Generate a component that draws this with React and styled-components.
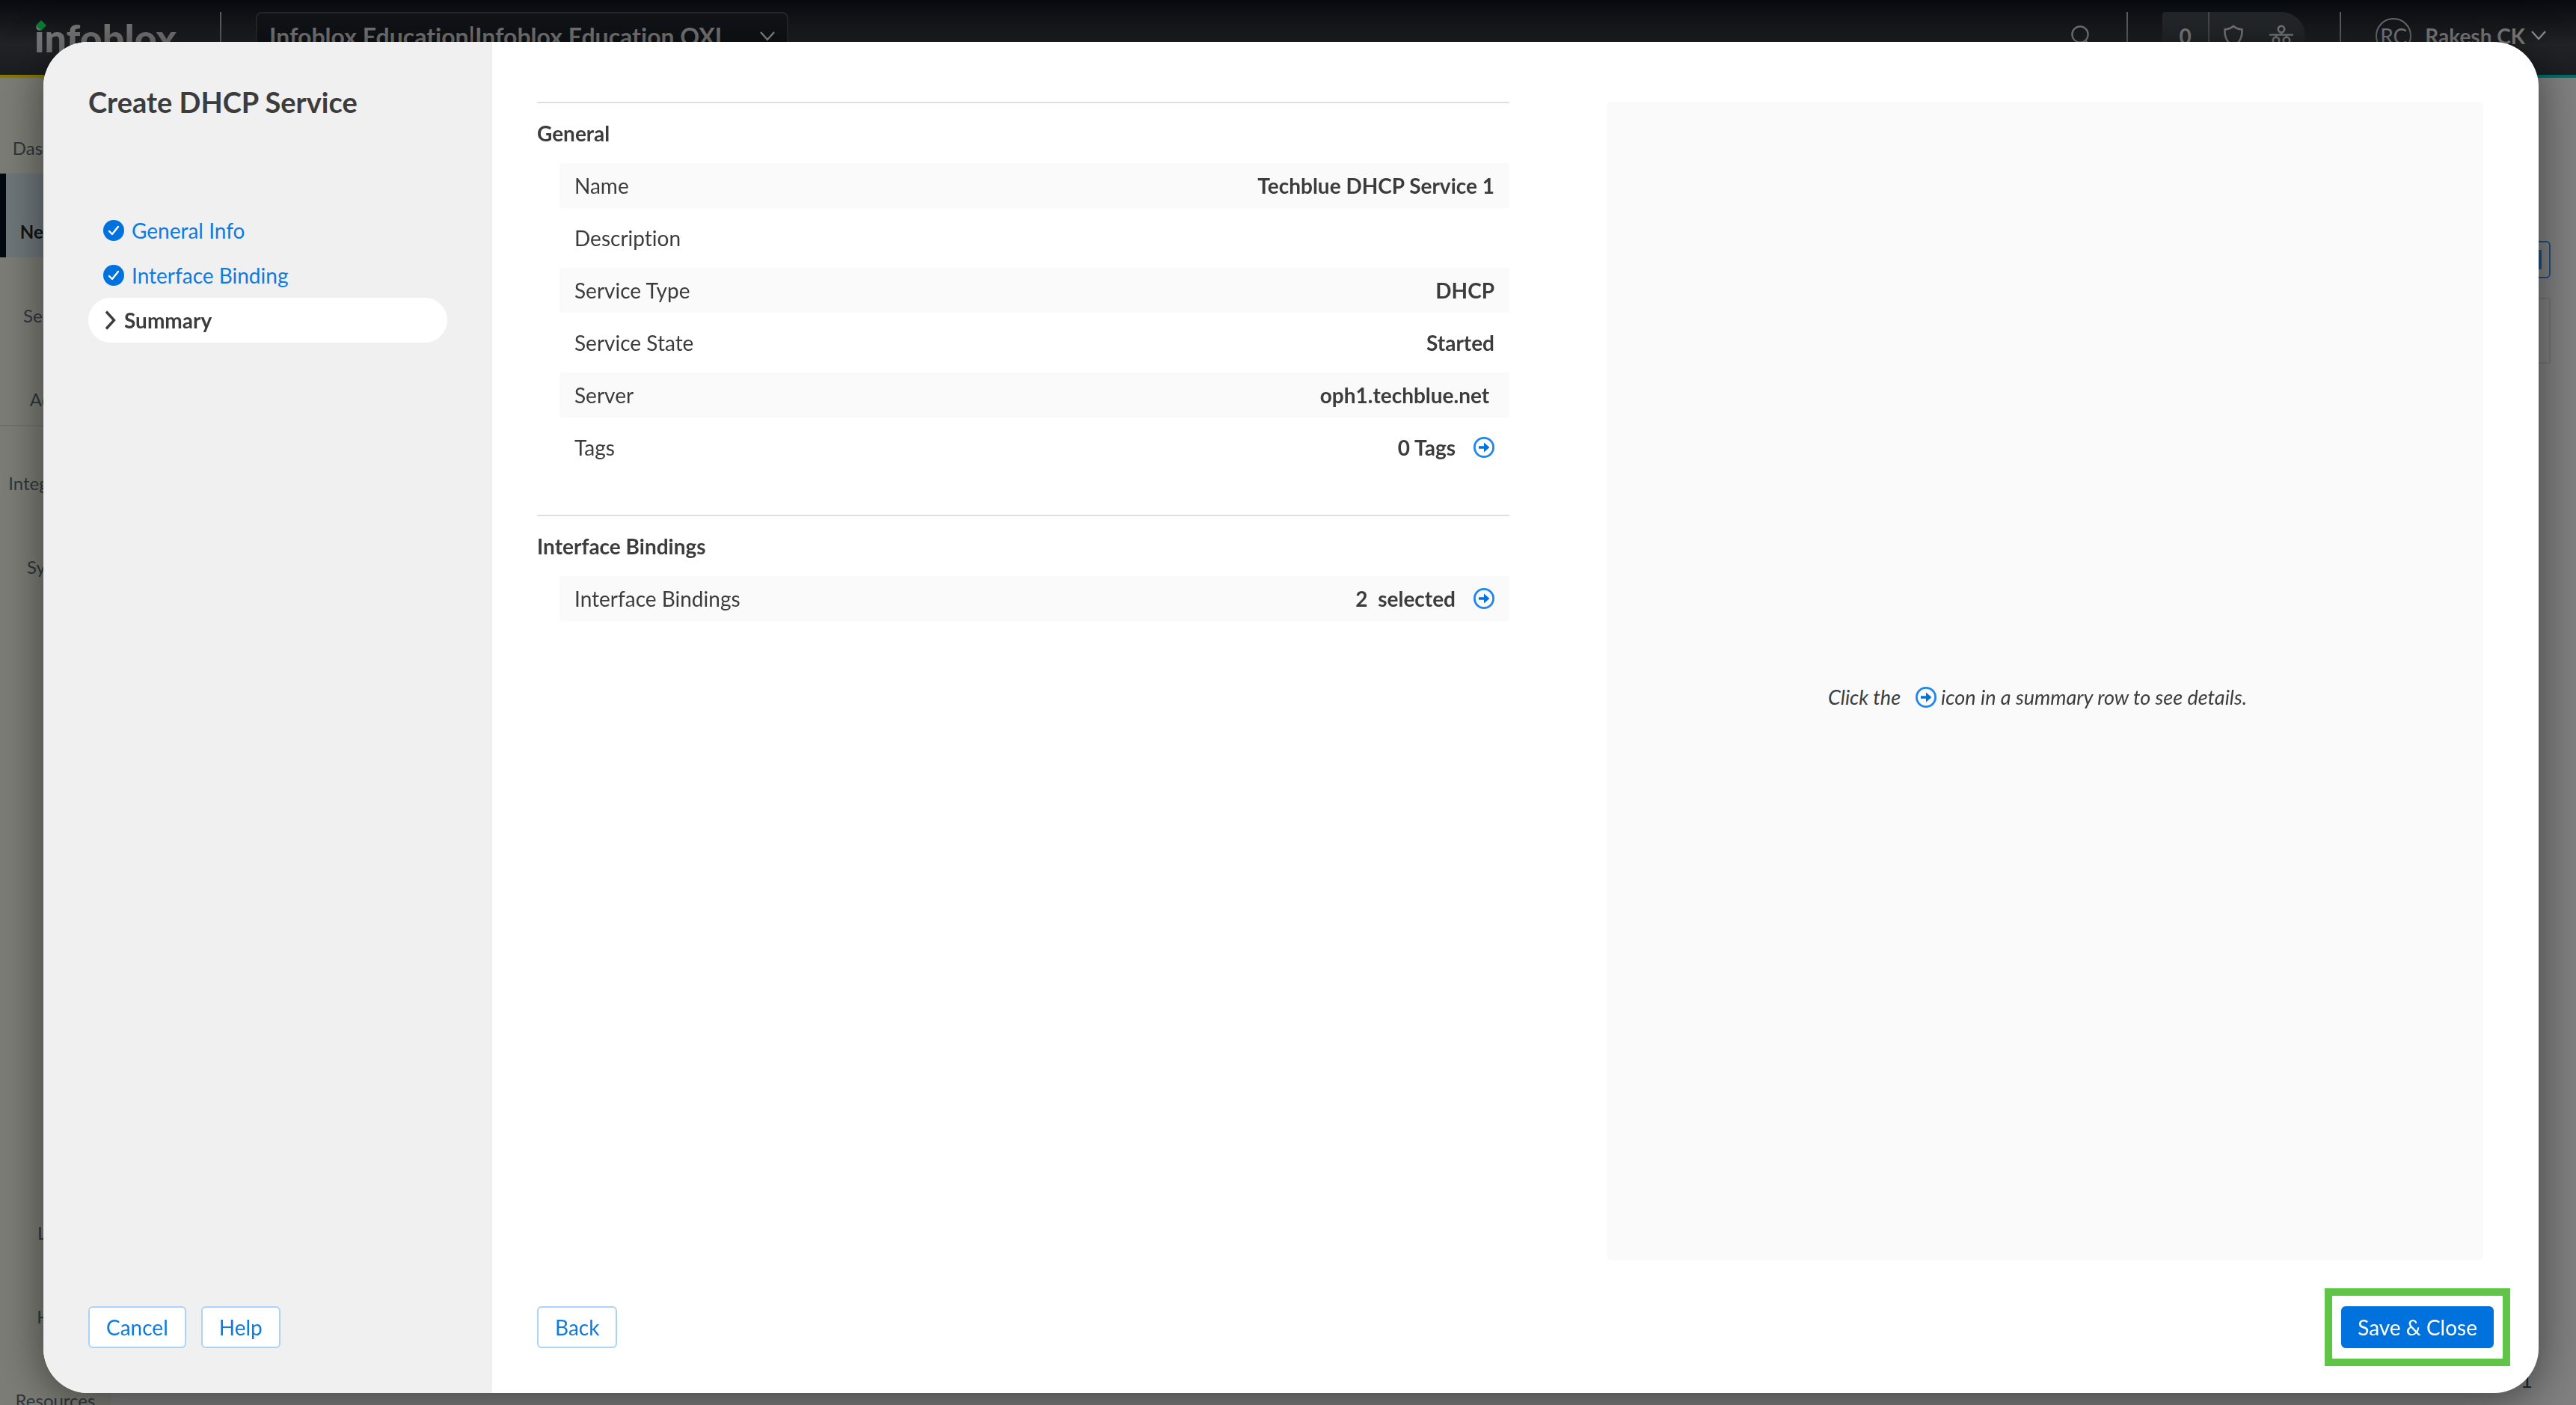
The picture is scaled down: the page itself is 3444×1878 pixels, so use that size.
import React from "react";
import styled, { createGlobalStyle } from "styled-components";

const GlobalStyle = createGlobalStyle`
  *, *::before, *::after { box-sizing: border-box; }
  html, body { margin: 0; height: 100%; overflow: hidden; }
  body {
    font-family: Lato, "Open Sans", sans-serif;
    font-size: 28px;
    line-height: 36px;
    font-variant-ligatures: none;
    color: #3c3c3c;
    background: #808080;
  }
  button { font: inherit; }
`;

const Page = styled.div`
  display: flex;
  flex-direction: column;
  height: 100vh;
  overflow: hidden;
`;

const TopBar = styled.header`
  display: flex;
  align-items: flex-start;
  justify-content: space-between;
  flex: none;
  height: 104px;
  padding: 16px 40px 0 46px;
  color: #7c7c7c;
  background: linear-gradient(#070a0f, #212325 60%, #1b1e21);
  border-bottom: 4px solid;
  border-image: linear-gradient(90deg, #8a7a00, #00706c) 1;
`;

const BarGroup = styled.div`
  display: flex;
  align-items: flex-start;
`;

const Logo = styled.span`
  position: relative;
  width: 202px;
  font-size: 52px;
  line-height: 68px;
  font-weight: 900;
  color: #767676;

  &::before {
    content: "";
    position: absolute;
    top: 13px;
    left: 4px;
    width: 10px;
    height: 10px;
    background: #0a7a34;
    transform: rotate(45deg);
  }
`;

const Rule = styled.span`
  width: 2px;
  height: 68px;
  margin: 0 46px;
  background: #5c5e60;
`;

const Account = styled.button`
  display: flex;
  align-items: center;
  justify-content: space-between;
  width: 712px;
  height: 66px;
  padding: 0 16px;
  color: #777;
  font-size: 32px;
  font-weight: 700;
  background: #101317;
  border: 2px solid #24272a;
  border-radius: 8px;
`;

const IconButton = styled.button`
  display: flex;
  align-items: center;
  justify-content: center;
  height: 64px;
  padding: 0;
  border: 0;
  color: inherit;
  background: none;
`;

const Pill = styled.div`
  display: grid;
  grid-template-columns: 63px 64px 64px;
  height: 64px;
  font-weight: 700;
  background: #23272a;
  border-radius: 4px 32px 32px 4px;

  > :first-child { border-right: 2px solid #45494c; }
`;

const Avatar = styled.span`
  display: flex;
  align-items: center;
  justify-content: center;
  width: 48px;
  height: 48px;
  margin-right: 18px;
  font-weight: 400;
  border: 2px solid #6c6c6c;
  border-radius: 50%;
`;

const User = styled(IconButton)`
  font-weight: 700;

  svg { margin-left: 8px; }
`;

const Body = styled.div`
  display: flex;
  flex: 1;
  min-height: 0;
`;

const Rail = styled.nav`
  display: flex;
  flex-direction: column;
  flex: none;
  width: 148px;
  height: calc(100% + 28px);
  padding-top: 16px;
  background: #7d7d77;
`;

const RailItem = styled.a`
  display: flex;
  align-items: flex-end;
  justify-content: center;
  flex: none;
  height: 112px;
  padding-bottom: 16px;
  font-size: 24px;
  color: ${(p) => (p.$active ? "#101418" : "#2f373d")};
  font-weight: ${(p) => (p.$active ? 700 : 400)};
  text-decoration: none;
  background: ${(p) => (p.$active ? "#6f777b" : "none")};
  box-shadow: ${(p) => (p.$active ? "inset 8px 0 #04080f" : "none")};
`;

const RailRule = styled.hr`
  width: 100%;
  height: 2px;
  margin: 0 0 -2px;
  border: 0;
  background: #73736e;
`;

const RailSpacer = styled.div`
  flex: 1;
`;

const Workspace = styled.main`
  display: flex;
  flex: 1;
  flex-direction: column;
  align-items: flex-end;
  padding: 218px 34px 16px;
`;

const GhostButton = styled.div`
  display: flex;
  align-items: center;
  justify-content: flex-end;
  width: 200px;
  height: 50px;
  padding-right: 10px;
  border: 2px solid #1d4f7c;
  border-radius: 6px;

  &::after {
    content: "";
    width: 6px;
    height: 26px;
    background: #1d4f7c;
  }
`;

const GhostPanel = styled.div`
  width: 200px;
  height: 88px;
  margin: 26px 0 auto;
  border: 2px solid #757575;
`;

const PageNumber = styled.span`
  padding-right: 24px;
  color: #22282c;
`;

const Dialog = styled.section`
  position: fixed;
  inset: 56px 50px 16px 58px;
  display: flex;
  overflow: hidden;
  background: #fff;
  border-radius: 60px;
`;

const DialogShadow = styled.div`
  position: fixed;
  inset: 56px 50px 16px 58px;
  border-radius: 60px;
  box-shadow: 0 8px 60px rgba(0, 0, 0, 0.5);
`;

const Side = styled.aside`
  display: flex;
  flex-direction: column;
  flex: none;
  width: 600px;
  padding: 56px 60px 60px;
  background: #f0f0f0;
`;

const Title = styled.h1`
  margin: 0 0 118px;
  font-size: 38px;
  line-height: 48px;
  font-weight: 700;
`;

const Steps = styled.ol`
  flex: 1;
  margin: 0;
  padding: 0;
  list-style: none;
`;

const Step = styled.a`
  display: flex;
  align-items: center;
  gap: 10px;
  height: 60px;
  padding: 0 20px;
  color: ${(p) => (p.$current ? "#3c3c3c" : "#0f7be0")};
  font-weight: ${(p) => (p.$current ? 700 : 400)};
  text-decoration: none;
  background: ${(p) => (p.$current ? "#fff" : "none")};
  border-radius: 30px;
`;

const Actions = styled.footer`
  display: flex;
  gap: 20px;
  justify-content: ${(p) => (p.$spread ? "space-between" : "flex-start")};
`;

const Button = styled.button`
  height: 56px;
  padding: 0 ${(p) => (p.$primary ? "20px" : "22px")};
  color: ${(p) => (p.$primary ? "#fff" : "#0f7be0")};
  background: ${(p) => (p.$primary ? "#0072dd" : "#fff")};
  border: 2px solid ${(p) => (p.$primary ? "#0072dd" : "#acd3f6")};
  border-radius: 6px;
`;

const Highlight = styled.div`
  position: relative;
  display: flex;

  &::after {
    content: "";
    position: absolute;
    inset: -24px -22px;
    border: 10px solid #60c446;
    pointer-events: none;
  }
`;

const Content = styled.div`
  display: flex;
  flex: 1;
  flex-direction: column;
  gap: 62px;
  padding: 80px 60px 60px;
`;

const Columns = styled.div`
  display: grid;
  flex: 1;
  grid-template-columns: 1300fr 1172fr;
  gap: 130px;
  padding-right: 14px;
`;

const Group = styled.section`
  margin-bottom: 60px;
  border-top: 2px solid #dedede;
`;

const GroupTitle = styled.h2`
  margin: 10px 0;
  font-size: 28px;
  line-height: 60px;
  font-weight: 700;
`;

const Rows = styled.dl`
  display: flex;
  flex-direction: column;
  gap: 10px;
  margin: 0 0 0 30px;
`;

const Row = styled.div`
  display: flex;
  align-items: center;
  justify-content: space-between;
  height: 60px;
  padding: 0 20px;

  &:nth-child(odd) { background: #fafafa; }
`;

const Value = styled.dd`
  display: flex;
  align-items: center;
  gap: 24px;
  margin: 0;
  font-weight: 700;
  white-space: pre-wrap;
`;

const DetailButton = styled.button`
  display: flex;
  padding: 0;
  border: 0;
  background: none;
`;

const Details = styled.aside`
  display: flex;
  align-items: center;
  justify-content: center;
  padding: 44px 20px 0 0;
  font-style: italic;
  background: #fafafa;
  border-radius: 6px;
`;

const Hint = styled.p`
  display: flex;
  align-items: center;
  margin: 0;
  font-size: 27px;

  svg { margin: 0 6px 0 20px; }
`;

const ArrowIcon = () => (
  <svg width="28" height="28" viewBox="0 0 28 28" fill="none" aria-hidden="true">
    <circle cx="14" cy="14" r="12.6" stroke="#1f86ee" strokeWidth="2.8" />
    <path d="M7 12.2h7V7.4l7.4 6.6-7.4 6.6v-4.8H7z" fill="#0072dd" />
  </svg>
);

const CheckIcon = () => (
  <svg width="28" height="28" viewBox="0 0 28 28" aria-hidden="true">
    <circle cx="14" cy="14" r="14" fill="#0072dd" />
    <path d="M8 15l4 4 8-10" fill="none" stroke="#fff" strokeWidth="2.4" strokeLinecap="round" strokeLinejoin="round" />
  </svg>
);

const NextIcon = () => (
  <svg width="18" height="28" viewBox="0 0 18 28" aria-hidden="true">
    <path d="M4 2.5L14.5 14 4 25.5" fill="none" stroke="#3c3c3c" strokeWidth="3.4" />
  </svg>
);

const DownIcon = () => (
  <svg width="20" height="14" viewBox="0 0 20 14" aria-hidden="true">
    <path d="M1 1l9 10 9-10" fill="none" stroke="#8a8a8a" strokeWidth="2.4" />
  </svg>
);

const SearchIcon = () => (
  <svg width="28" height="28" viewBox="0 0 28 28" fill="none" stroke="#777" strokeWidth="2.4" aria-hidden="true">
    <circle cx="12" cy="12" r="10.6" />
    <path d="M19 20l7 7" />
  </svg>
);

const ShieldIcon = () => (
  <svg width="28" height="30" viewBox="0 0 28 30" fill="none" stroke="#777" strokeWidth="2.6" aria-hidden="true">
    <path d="M14 2c3 2.6 7 4 11.5 4.4C26 16 23 24 14 28.500 5 24 2 16 2.5 6.4 7 6 11 4.6 14 2z" />
  </svg>
);

const NetworkIcon = () => (
  <svg width="32" height="30" viewBox="0 0 32 30" fill="none" stroke="#777" strokeWidth="2.6" aria-hidden="true">
    <circle cx="16" cy="6" r="4.2" />
    <path d="M16 10.5V13M0 13.5h32M9 14v3M23 14v3" />
    <circle cx="9" cy="21" r="4.2" />
    <circle cx="23" cy="21" r="4.2" />
  </svg>
);

const general = [
  ["Name", "Techblue DHCP Service 1"],
  ["Description", ""],
  ["Service Type", "DHCP"],
  ["Service State", "Started"],
  ["Server", "oph1.techblue.net "],
  ["Tags", "0 Tags", true],
];

const bindings = [["Interface Bindings", "2  selected", true]];

function SummaryGroup({ title, rows }) {
  return (
    <Group>
      <GroupTitle>{title}</GroupTitle>
      <Rows>
        {rows.map(([label, value, details]) => (
          <Row key={label}>
            <dt>{label}</dt>
            <Value>
              {value}
              {details && (
                <DetailButton aria-label={`${label} details`}><ArrowIcon /></DetailButton>
              )}
            </Value>
          </Row>
        ))}
      </Rows>
    </Group>
  );
}

export default function App() {
  return (
    <>
      <GlobalStyle />
      <Page>
        <TopBar>
          <BarGroup>
            <Logo>infoblox</Logo>
            <Rule />
            <Account>Infoblox Education|Infoblox Education QXI<DownIcon /></Account>
          </BarGroup>
          <BarGroup>
            <IconButton aria-label="Search"><SearchIcon /></IconButton>
            <Rule />
            <Pill>
              <IconButton>0</IconButton>
              <IconButton aria-label="Security"><ShieldIcon /></IconButton>
              <IconButton aria-label="Network"><NetworkIcon /></IconButton>
            </Pill>
            <Rule />
            <User><Avatar>RC</Avatar>Rakesh CK<DownIcon /></User>
          </BarGroup>
        </TopBar>
        <Body>
          <Rail>
            <RailItem href="#">Dashboard</RailItem>
            <RailItem href="#" $active>Network</RailItem>
            <RailItem href="#">Security</RailItem>
            <RailItem href="#">Admin</RailItem>
            <RailRule />
            <RailItem href="#">Integrations</RailItem>
            <RailItem href="#">System</RailItem>
            <RailSpacer />
            <RailItem href="#">Labs</RailItem>
            <RailItem href="#">Help</RailItem>
            <RailItem href="#">Resources</RailItem>
          </Rail>
          <Workspace>
            <GhostButton />
            <GhostPanel />
            <PageNumber>1</PageNumber>
          </Workspace>
        </Body>
      </Page>
      <DialogShadow />
      <Dialog role="dialog" aria-labelledby="dialog-title">
        <Side>
          <Title id="dialog-title">Create DHCP Service</Title>
          <Steps>
            <li><Step href="#"><CheckIcon />General Info</Step></li>
            <li><Step href="#"><CheckIcon />Interface Binding</Step></li>
            <li><Step href="#" $current><NextIcon />Summary</Step></li>
          </Steps>
          <Actions>
            <Button>Cancel</Button>
            <Button>Help</Button>
          </Actions>
        </Side>
        <Content>
          <Columns>
            <div>
              <SummaryGroup title="General" rows={general} />
              <SummaryGroup title="Interface Bindings" rows={bindings} />
            </div>
            <Details>
              <Hint>Click the <ArrowIcon />icon in a summary row to see details.</Hint>
            </Details>
          </Columns>
          <Actions $spread>
            <Button>Back</Button>
            <Highlight><Button $primary>Save &amp; Close</Button></Highlight>
          </Actions>
        </Content>
      </Dialog>
    </>
  );
}
